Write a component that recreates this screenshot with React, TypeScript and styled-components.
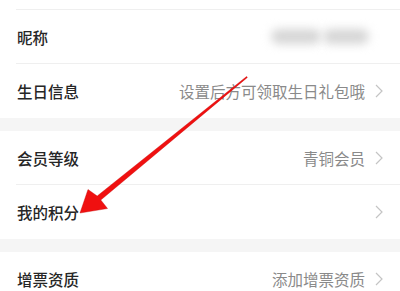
import styled, { createGlobalStyle } from "styled-components";

const GlobalStyle = createGlobalStyle`
  html, body {
    margin: 0;
    padding: 0;
    background: #ffffff;
    overflow: hidden;
  }
  body {
    font-family: "Noto Sans CJK SC", "Noto Sans", sans-serif;
  }
`;

const Page = styled.div`
  position: relative;
  width: 400px;
  height: 291px;
  overflow: hidden;
  background: #f5f5f5;
`;

const List = styled.div`
  margin-top: -44px;
  display: flex;
  flex-direction: column;
`;

const Section = styled.div`
  background: #ffffff;
  & + & {
    margin-top: 13px;
  }
`;

const Row = styled.div`
  position: relative;
  height: 53px;
  display: flex;
  align-items: center;
  padding: 0 17px;
  border-bottom: 1px solid transparent;
  &:not(:last-child)::after {
    content: "";
    position: absolute;
    left: 16px;
    right: 0;
    bottom: -1px;
    height: 1px;
    background: #efefef;
  }
`;

const Label = styled.span`
  font-size: 15.5px;
  font-weight: 500;
  color: #262626;
  flex: 1;
`;

const Value = styled.span`
  font-size: 15.5px;
  color: #8a8a8a;
`;

const Chevron = styled.svg`
  width: 8px;
  height: 14px;
  margin-left: 10px;
  flex-shrink: 0;
`;

const Blurred = styled.div`
  display: flex;
  gap: 2px;
  margin-right: 14px;
  span {
    display: block;
    height: 15px;
    border-radius: 8px;
    background: #d6d6d6;
    filter: blur(5px);
  }
`;

const Arrow = styled.svg`
  position: absolute;
  left: 0;
  top: 0;
  width: 400px;
  height: 291px;
  pointer-events: none;
`;

function Arrowhead() {
  return (
    <Chevron viewBox="0 0 8 14">
      <polyline points="1,1 7,7 1,13" fill="none" stroke="#c4c4c4" strokeWidth="1.2" />
    </Chevron>
  );
}

interface IItem {
  label: string;
  value?: string;
  blurred?: boolean;
  arrow?: boolean;
}

const sections: IItem[][] = [
  [
    { label: "" },
    { label: "昵称", blurred: true },
    { label: "生日信息", value: "设置后方可领取生日礼包哦", arrow: true },
  ],
  [
    { label: "会员等级", value: "青铜会员", arrow: true },
    { label: "我的积分", arrow: true },
  ],
  [{ label: "增票资质", value: "添加增票资质", arrow: true }],
];

function App() {
  return (
    <Page>
      <GlobalStyle />
      <List>
        {sections.map((items, i) => (
          <Section key={i}>
            {items.map((item, j) => (
              <Row key={j}>
                <Label>{item.label}</Label>
                {item.blurred && (
                  <Blurred>
                    <span style={{ width: 50 }} />
                    <span style={{ width: 46 }} />
                  </Blurred>
                )}
                {item.value && <Value>{item.value}</Value>}
                {item.arrow && <Arrowhead />}
              </Row>
            ))}
          </Section>
        ))}
      </List>
      <Arrow viewBox="0 0 400 291">
        <polygon
          points="246.6,76.5 247.4,77.4 100.8,200 107.5,208.5 80,213 88,189.5 97.2,196"
          fill="#f01010"
          stroke="#c40a0a"
          strokeWidth="0.4"
          strokeLinejoin="round"
        />
      </Arrow>
    </Page>
  );
}

export default App;
